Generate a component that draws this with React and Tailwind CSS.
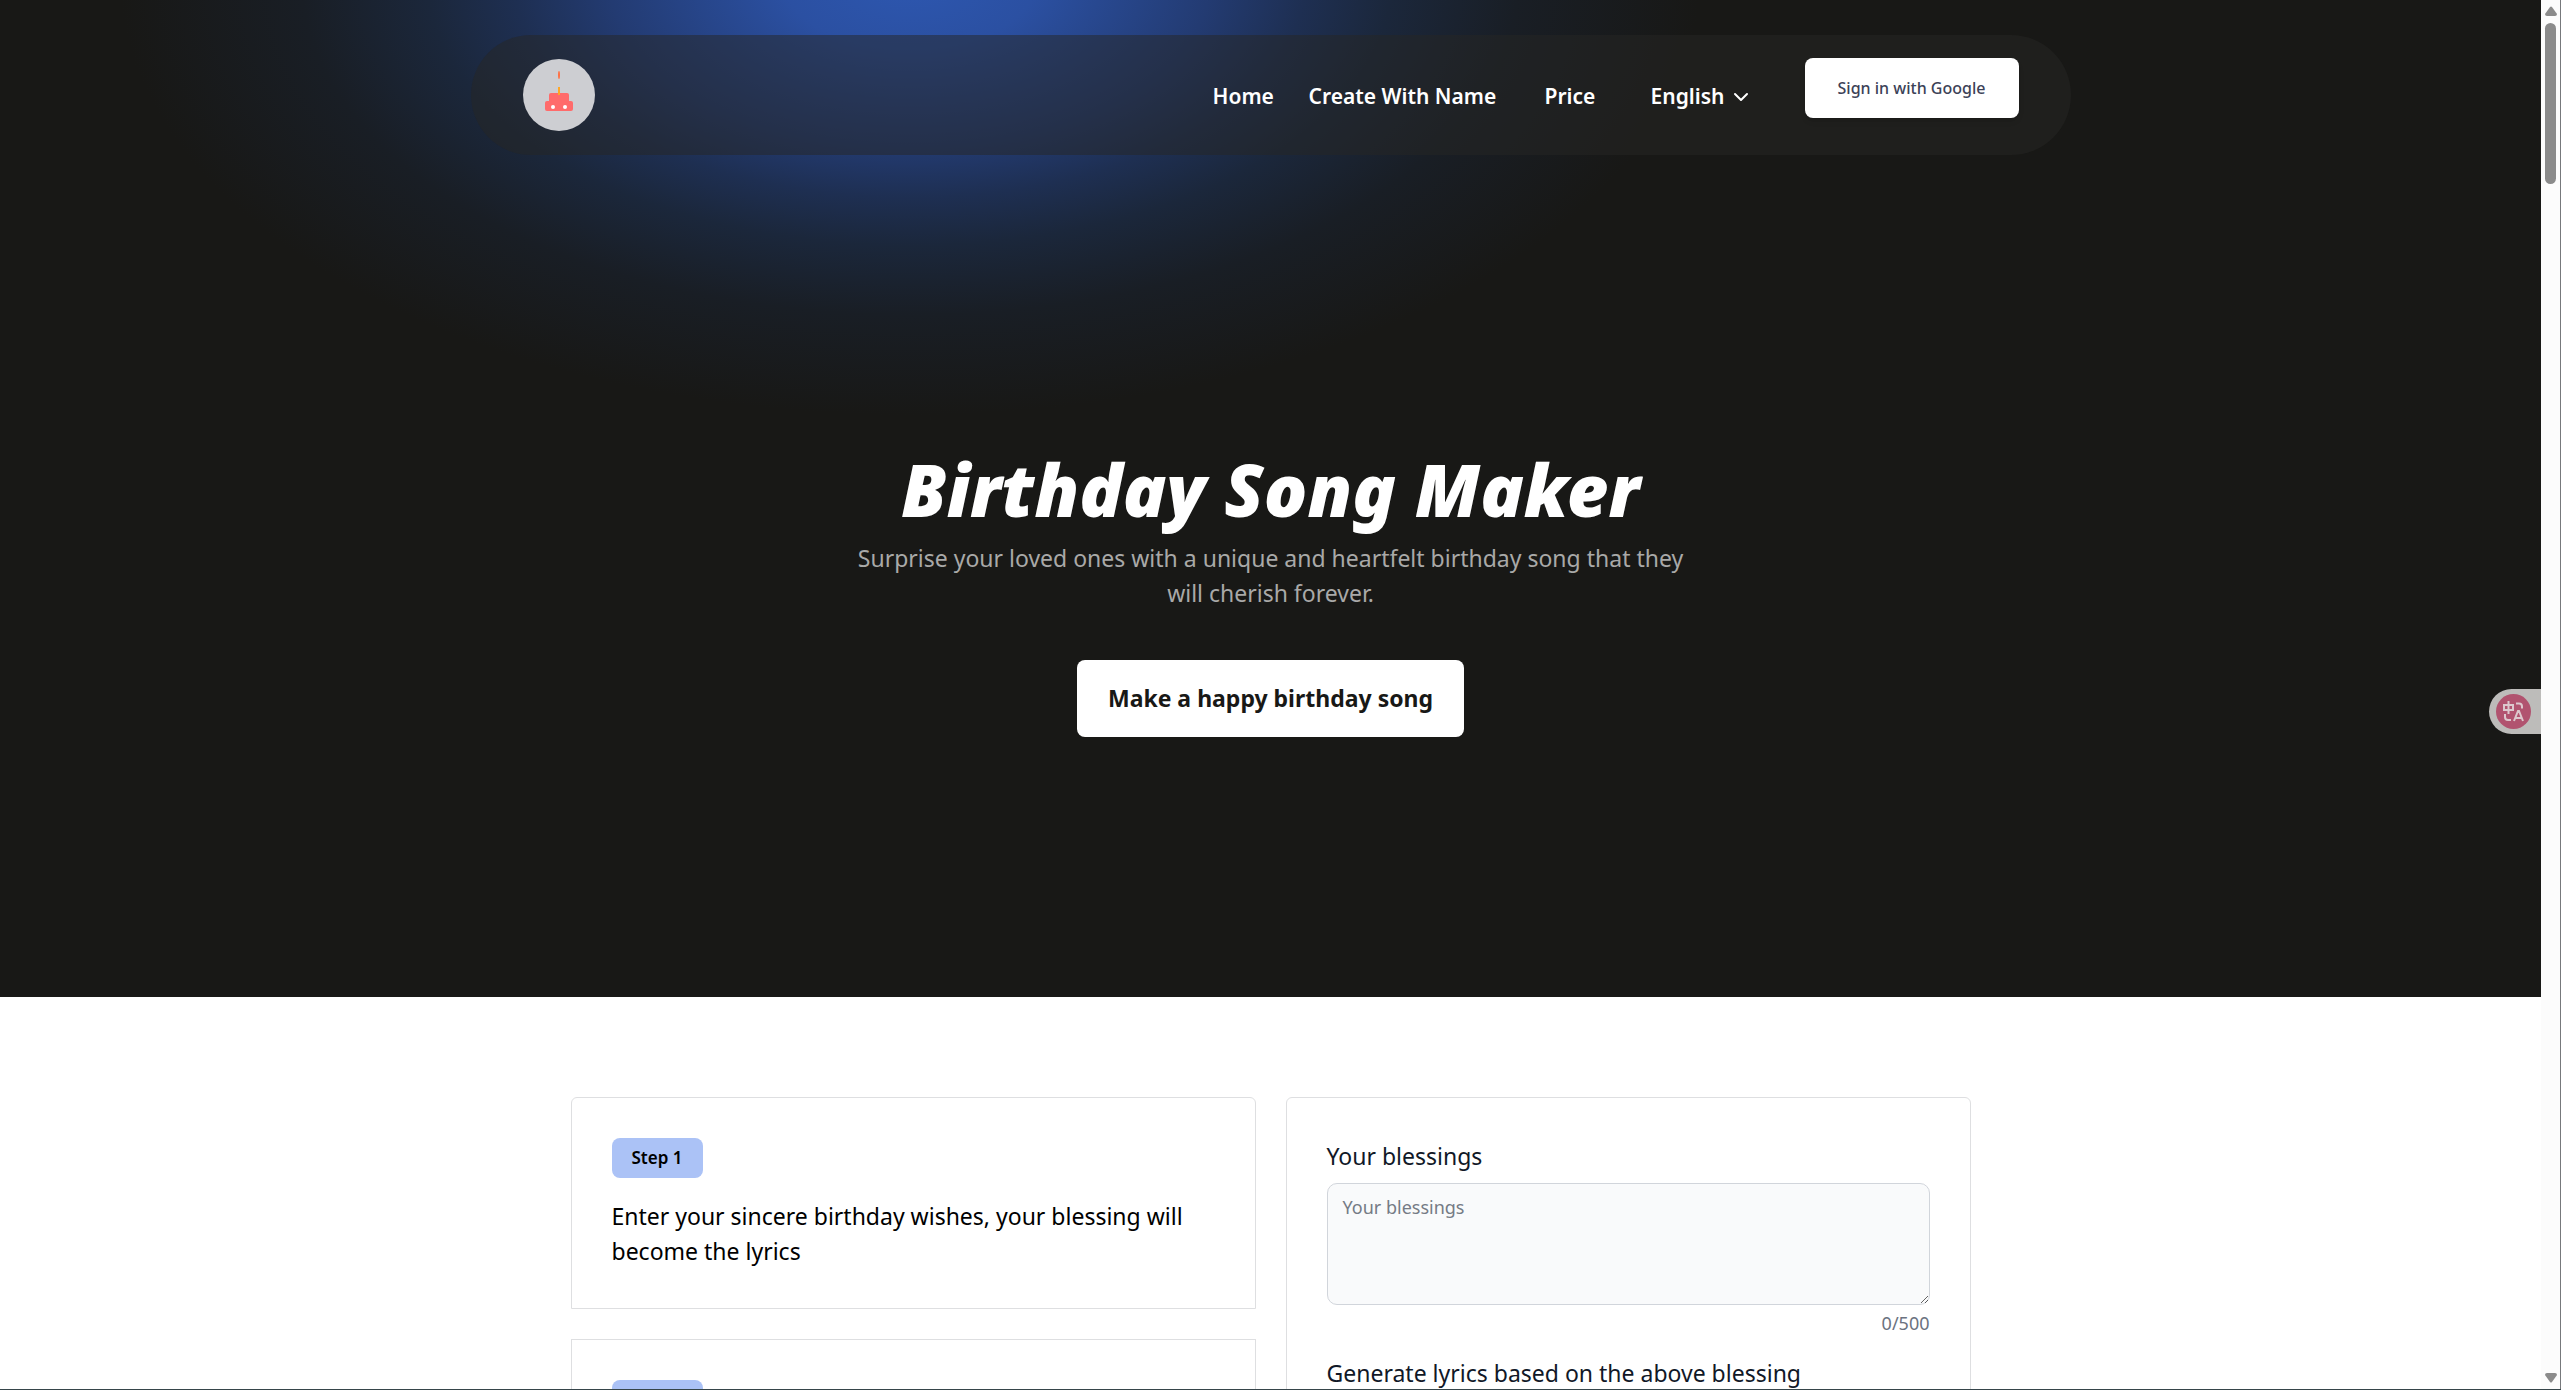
import { useState } from 'react'
import { ChevronDown } from 'lucide-react'

const navLinks = [
  { label: 'Home', href: '#home', width: 'w-14' },
  { label: 'Create With Name', href: '#create', width: 'w-[196px]' },
  { label: 'Price', href: '#price', width: 'w-14' },
]

const steps = [
  { id: 1, title: 'Step 1', text: 'Enter your sincere birthday wishes, your blessing will become the lyrics' },
  { id: 2 },
]

function CakeLogo() {
  return (
    <svg viewBox="0 0 72 72" className="size-[72px]" aria-hidden="true">
      <circle cx="36" cy="36" r="36" fill="#cdced2" />
      <rect x="26" y="34" width="20" height="12" rx="2" fill="#ff6b6b" />
      <rect x="22" y="42" width="28" height="10" rx="2" fill="#ff6b6b" />
      <rect x="35" y="28" width="2" height="8" fill="#ffa726" />
      <ellipse cx="36" cy="16" rx="1" ry="4" fill="#ff7043" />
      <circle cx="30" cy="48" r="2" fill="#fff" />
      <circle cx="42" cy="48" r="2" fill="#fff" />
    </svg>
  )
}

function Header() {
  return (
    <header className="relative mx-auto flex h-[120px] w-full max-w-[1600px] items-start justify-between rounded-[60px] bg-[#262624]/50 px-[52px] pt-[23px]">
      <a href="#home" aria-label="Birthday Song Maker" className="flex h-[74px] items-center">
        <CakeLogo />
      </a>
      <div className="flex items-start">
        <nav className="flex h-[78px] items-center gap-10 text-[21px] font-semibold text-white">
          {navLinks.map((link) => (
            <a key={link.label} href={link.href} className={`${link.width} whitespace-nowrap`}>
              {link.label}
            </a>
          ))}
          <button type="button" className="ml-2.5 flex items-center gap-1">
            English
            <ChevronDown size={24} />
          </button>
        </nav>
        <button type="button" className="ml-[52px] h-[60px] w-[214px] rounded-lg bg-white text-base font-medium text-[#3c4257] shadow-md">
          Sign in with Google
        </button>
      </div>
    </header>
  )
}

function Hero() {
  return (
    <section className="relative h-[997px] overflow-hidden bg-[#181816] pt-[35px]">
      {/* Blue glow behind the header */}
      <div className="absolute inset-0 bg-[radial-gradient(790px_435px_at_910px_-20px,#2d57b0_0%,#2b50a2_16%,#233b72_38%,#1e2f52_50%,#1b273b_61%,#191e25_77%,#181816_100%)]"></div>
      <Header />
      <div className="relative mx-auto flex max-w-[845px] flex-col items-center pt-[298px] text-center">
        <h1 className="text-7xl font-black whitespace-nowrap text-white italic">Birthday Song Maker</h1>
        <p className="mt-4 text-[23px] leading-[35px] text-[#a9a9a8]">
          Surprise your loved ones with a unique and heartfelt birthday song that they will cherish forever.
        </p>
        <button type="button" className="mt-[49px] h-[77px] w-[387px] rounded-lg bg-white text-[23px] font-bold text-[#181816]">
          Make a happy birthday song
        </button>
      </div>
    </section>
  )
}

function StepCard({ title, text }) {
  return (
    <article className="border border-[#dedfe1] px-10 pt-10 pb-[39px] first:rounded-t-md">
      <h2 className="flex h-10 w-[91px] items-center justify-center rounded-lg bg-[#abc2f6] text-[17px] font-semibold">{title}</h2>
      <p className="mt-[21px] text-[23px] leading-[35px]">{text}</p>
    </article>
  )
}

function BlessingForm() {
  const [blessing, setBlessing] = useState('')

  return (
    <form className="rounded-t-md border border-[#dedfe1] px-10 pt-[41px] text-[#111827]">
      <label htmlFor="blessing" className="block text-[23px] leading-[35px]">Your blessings</label>
      <textarea
        id="blessing"
        maxLength={500}
        value={blessing}
        onChange={(e) => setBlessing(e.target.value)}
        placeholder="Your blessings"
        className="mt-[9px] block h-[122px] w-full rounded-[10px] border border-[#d1d5db] bg-[#f9fafb] px-[15px] py-2.5 text-[18px] placeholder:text-[#757b85]"
      />
      <p className="mt-[5px] text-right text-[18px] text-[#6b7280]">{blessing.length}/500</p>
      <p className="mt-[19px] text-[23px] leading-[35px]">Generate lyrics based on the above blessing</p>
    </form>
  )
}

function TranslateBubble() {
  return (
    <button type="button" aria-label="Translate" className="absolute top-[689px] right-0 flex h-[45px] w-[52px] items-center rounded-l-full bg-[#bdbcba] pl-[7px]">
      <svg viewBox="0 0 35 35" className="size-[35px]" fill="none" stroke="#dcc8cd" strokeWidth="2">
        <circle cx="17.5" cy="17.5" r="17.5" fill="#b1536f" stroke="none" />
        <path d="M8 11h9v5H8zM12.5 7v13M20 9.500h3q3 0 3 3v2M9 20v3q0 3 3 3h3M18 27l4-10h1l4 10M19 24h7" />
      </svg>
    </button>
  )
}

function ScrollRail() {
  return (
    <div className="flex w-5 shrink-0 flex-col items-center justify-between border-r border-[#77797c] bg-[#fcfcfc] pt-[6px] pb-[6px]" aria-hidden="true">
      <div className="flex flex-col items-center gap-[7px]">
        <svg viewBox="0 0 12 10" className="h-[10px] w-3" fill="#8b8b8b">
          <path d="M5 1q1-1 2 0l5 7q0 2-2 2H2q-2 0-2-2z" />
        </svg>
        <div className="h-[161px] w-[11px] rounded-full bg-[#8b8b8b]"></div>
      </div>
      <svg viewBox="0 0 12 10" className="h-[10px] w-3" fill="#8b8b8b">
        <path d="M5 9q1 1 2 0l5-7q0-2-2-2H2Q0 0 0 2z" />
      </svg>
    </div>
  )
}

export default function App() {
  return (
    <div className="flex h-screen overflow-hidden border-b border-[#36454a] bg-white font-['Noto_Sans',sans-serif] text-black">
      <main className="relative flex-1 overflow-hidden">
        <Hero />
        <section className="mx-auto mt-[100px] grid max-w-[1400px] grid-cols-2 gap-[30px]">
          <div className="flex flex-col gap-[30px]">
            {steps.map((step) => (
              <StepCard key={step.id} title={step.title} text={step.text} />
            ))}
          </div>
          <BlessingForm />
        </section>
        <TranslateBubble />
      </main>
      <ScrollRail />
    </div>
  )
}
